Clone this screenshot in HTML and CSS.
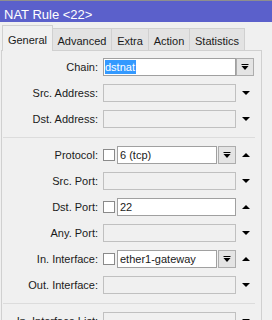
FILE: index.html
```html
<!DOCTYPE html>
<html>
<head>
<meta charset="utf-8">
<link rel="stylesheet" href="styles.css">
</head>
<body>
<div class="window">
  <div class="titlebar"><span class="title">NAT Rule &lt;22&gt;</span></div>
  <div class="tabs">
    <div class="tab active t-general">General</div>
    <div class="tab t-advanced">Advanced</div>
    <div class="tab t-extra">Extra</div>
    <div class="tab t-action">Action</div>
    <div class="tab t-stats">Statistics</div>
  </div>
  <div class="panel">
    <div class="form">
      <div class="row">
        <div class="label">Chain:</div>
        <div class="field">
          <div class="input"><span class="sel">dstnat</span></div>
        </div>
        <div class="slot">
          <div class="btn"><svg width="8" height="7" viewBox="0 0 8 7"><rect x="0.5" y="0" width="7" height="1"/><path d="M0.5 2h7l-3.5 4z"/></svg></div>
        </div>
      </div>
      <div class="row">
        <div class="label">Src. Address:</div>
        <div class="field"><div class="input dis"></div></div>
        <div class="slot"><svg class="arrow" width="8" height="4" viewBox="0 0 8 4"><path d="M0 0h8l-4 4z"/></svg></div>
      </div>
      <div class="row">
        <div class="label">Dst. Address:</div>
        <div class="field"><div class="input dis"></div></div>
        <div class="slot"><svg class="arrow" width="8" height="4" viewBox="0 0 8 4"><path d="M0 0h8l-4 4z"/></svg></div>
      </div>
      <div class="sep"></div>
      <div class="row">
        <div class="label">Protocol:</div>
        <div class="field">
          <div class="check"></div>
          <div class="input">6 (tcp)</div>
          <div class="btn"><svg width="8" height="7" viewBox="0 0 8 7"><rect x="0.5" y="0" width="7" height="1"/><path d="M0.5 2h7l-3.5 4z"/></svg></div>
        </div>
        <div class="slot"><svg class="arrow" width="8" height="4" viewBox="0 0 8 4"><path d="M0 4h8l-4 -4z"/></svg></div>
      </div>
      <div class="row">
        <div class="label">Src. Port:</div>
        <div class="field"><div class="input dis"></div></div>
        <div class="slot"><svg class="arrow" width="8" height="4" viewBox="0 0 8 4"><path d="M0 0h8l-4 4z"/></svg></div>
      </div>
      <div class="row">
        <div class="label">Dst. Port:</div>
        <div class="field">
          <div class="check"></div>
          <div class="input">22</div>
        </div>
        <div class="slot"><svg class="arrow" width="8" height="4" viewBox="0 0 8 4"><path d="M0 4h8l-4 -4z"/></svg></div>
      </div>
      <div class="row">
        <div class="label">Any. Port:</div>
        <div class="field"><div class="input dis"></div></div>
        <div class="slot"><svg class="arrow" width="8" height="4" viewBox="0 0 8 4"><path d="M0 0h8l-4 4z"/></svg></div>
      </div>
      <div class="row">
        <div class="label">In. Interface:</div>
        <div class="field">
          <div class="check"></div>
          <div class="input">ether1-gateway</div>
          <div class="btn"><svg width="8" height="7" viewBox="0 0 8 7"><rect x="0.5" y="0" width="7" height="1"/><path d="M0.5 2h7l-3.5 4z"/></svg></div>
        </div>
        <div class="slot"><svg class="arrow" width="8" height="4" viewBox="0 0 8 4"><path d="M0 4h8l-4 -4z"/></svg></div>
      </div>
      <div class="row">
        <div class="label">Out. Interface:</div>
        <div class="field"><div class="input dis"></div></div>
        <div class="slot"><svg class="arrow" width="8" height="4" viewBox="0 0 8 4"><path d="M0 0h8l-4 4z"/></svg></div>
      </div>
      <div class="sep"></div>
      <div class="row">
        <div class="label">In. Interface List:</div>
        <div class="field"><div class="input dis"></div></div>
        <div class="slot"><svg class="arrow" width="8" height="4" viewBox="0 0 8 4"><path d="M0 0h8l-4 4z"/></svg></div>
      </div>
    </div>
  </div>
</div>
</body>
</html>
```

FILE: styles.css
```css
html, body {
  margin: 0;
  padding: 0;
  width: 272px;
  height: 320px;
  overflow: hidden;
  background: #f0f0f0;
  font-family: "Liberation Sans", Arial, sans-serif;
  font-size: 11px;
  color: #1a1a1a;
}

.window {
  display: flex;
  flex-direction: column;
  height: 320px;
}

.titlebar {
  flex: none;
  height: 21px;
  border-top: 1px solid #8e8e8e;
  background: #5b60cb;
  color: #fff;
  display: flex;
  align-items: flex-end;
  padding-left: 4px;
  box-sizing: content-box;
}

.title {
  font-size: 13px;
  line-height: 13px;
  padding-bottom: 1px;
}

.tabs {
  flex: none;
  display: flex;
  align-items: flex-end;
  height: 25px;
  margin-top: 3px;
  padding-left: 2px;
  position: relative;
  z-index: 1;
}

.tab {
  height: 22px;
  line-height: 13px;
  padding-top: 6px;
  text-align: center;
  background: #e3e3e3;
  border: 1px solid #d0d0d0;
  border-bottom: none;
  border-left: none;
  box-sizing: border-box;
}

.tab.active {
  height: 26px;
  padding-top: 8px;
  background: #f0f0f0;
  border-left: 1px solid #d0d0d0;
  margin-bottom: -1px;
}

.t-general { width: 51px; }
.t-advanced { width: 59px; }
.t-extra { width: 37px; }
.t-action { width: 41px; }
.t-stats { width: 55px; }

.panel {
  flex: 1;
  margin-left: 1px;
  width: 261px;
  border: 1px solid #d0d0d0;
  border-bottom: none;
  box-sizing: border-box;
}

.form {
  display: flex;
  flex-direction: column;
  gap: 8px;
  padding-top: 7px;
}

.row {
  display: flex;
  height: 18px;
  align-items: center;
}

.label {
  width: 96px;
  text-align: right;
  white-space: nowrap;
  flex: none;
  margin-right: 5px;
}

.field {
  width: 133px;
  height: 18px;
  display: flex;
  align-items: center;
  flex: none;
}

.input {
  flex: 1;
  height: 18px;
  box-sizing: border-box;
  border: 1px solid #a0a0a0;
  background: #fff;
  line-height: 16px;
  padding-left: 2px;
  white-space: nowrap;
  overflow: hidden;
}

.input.dis {
  background: #f0f0f0;
  border-color: #c0c0c0;
}

.sel {
  background: #3399ff;
  color: #fff;
  display: inline-block;
  height: 14px;
  line-height: 14px;
  margin-top: 1px;
  vertical-align: top;
  padding: 0 1px 0 0;
  margin-left: -1px;
}

.check {
  width: 12px;
  height: 12px;
  box-sizing: border-box;
  border: 1px solid #8a8a8a;
  background: #fff;
  margin-right: 2px;
  flex: none;
}

.btn {
  width: 18px;
  height: 18px;
  box-sizing: border-box;
  border: 1px solid #adadad;
  background: #e4e4e4;
  display: flex;
  align-items: center;
  justify-content: center;
  margin-left: 1px;
  flex: none;
}

.btn svg, .arrow {
  display: block;
  fill: #000;
}

.slot {
  width: 20px;
  height: 18px;
  display: flex;
  align-items: center;
  justify-content: center;
  flex: none;
}

.slot .btn {
  margin-left: -2px;
}

.sep {
  height: 1px;
  margin: 1px 6px 0 1px;
  background: #dcdcdc;
}
```
